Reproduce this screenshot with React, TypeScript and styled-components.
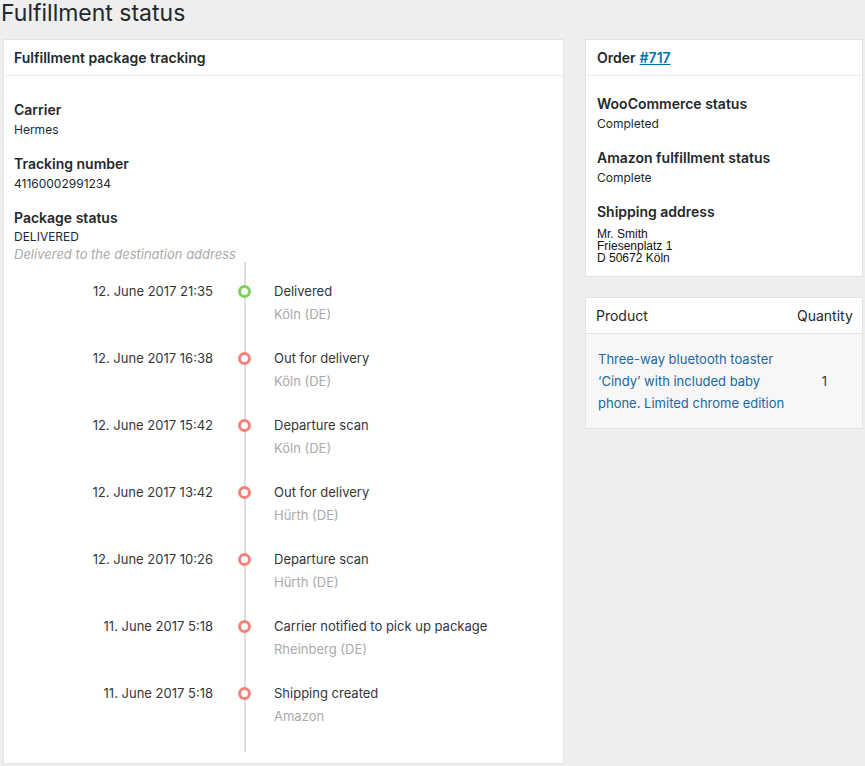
import styled, { createGlobalStyle } from "styled-components";

const GlobalStyle = createGlobalStyle`
  body {
    margin: 0;
    background: #eeeeee;
    font-family: Inter, "Noto Sans", sans-serif;
    color: #32373c;
  }
`;

const Page = styled.div`
  width: 865px;
`;

const Title = styled.h1`
  margin: 0;
  padding-left: 1px;
  font-size: 23px;
  font-weight: 400;
  line-height: 26px;
  color: #23282d;
  height: 39px;
`;

const Columns = styled.div`
  display: flex;
  align-items: flex-start;
  gap: 21px;
  padding-left: 3px;
`;

const Side = styled.div`
  display: flex;
  flex-direction: column;
  gap: 20px;
  width: 278px;
`;

const Panel = styled.section<{ $width?: number; $pad?: number }>`
  background: #fff;
  border: 1px solid #e3e3e3;
  box-sizing: border-box;
  width: ${({ $width }) => ($width ? `${$width}px` : "100%")};
  --pad: ${({ $pad }) => $pad ?? 10}px;
`;

const PanelHeader = styled.h2`
  margin: 0;
  height: 35px;
  display: flex;
  align-items: center;
  padding: 0 var(--pad);
  border-bottom: 1px solid #eeeeee;
  font-size: 14px;
  font-weight: 600;
  color: #23282d;

  a {
    color: #0073aa;
    margin-left: 4px;
  }
`;

const PanelBody = styled.div<{ $top: number; $bottom: number }>`
  padding: ${({ $top }) => $top}px var(--pad) ${({ $bottom }) => $bottom}px;
`;

const Field = styled.div`
  & + & {
    margin-top: 14px;
  }
`;

const Label = styled.h4`
  margin: 0;
  font-size: 14px;
  font-weight: 600;
  line-height: 20px;
  color: #23282d;
`;

const Value = styled.div<{ $lh?: number }>`
  font-size: 12px;
  line-height: ${({ $lh }) => $lh ?? 20}px;
  color: #23282d;
`;

const Note = styled.div`
  font-size: 13px;
  font-style: italic;
  line-height: 16px;
  color: #aaaaaa;
`;

const Address = styled.address`
  margin-top: 6px;
  font-style: normal;
  font-family: "Liberation Sans", Arial, sans-serif;
  font-size: 12px;
  line-height: 12px;
  color: #111;
`;

const Timeline = styled.div`
  position: relative;
  padding: 19px 0 24px;
`;

const Rail = styled.div`
  position: absolute;
  top: 0;
  bottom: 0;
  left: 230px;
  width: 2px;
  background: #dddddd;
`;

const Event = styled.div`
  position: relative;
  display: flex;
  align-items: flex-start;
  height: 67px;

  &:last-child {
    height: 45px;
  }
`;

const When = styled.div`
  width: 199px;
  text-align: right;
  font-size: 13px;
  line-height: 20px;
  color: #32373c;
`;

const Marker = styled.div`
  width: 63px;
  height: 20px;
  margin-right: -2px;
  display: flex;
  align-items: center;
  justify-content: center;
`;

const Dot = styled.span<{ $done?: boolean }>`
  width: 13px;
  height: 13px;
  box-sizing: border-box;
  border-radius: 50%;
  background: #fff;
  border: 3px solid ${({ $done }) => ($done ? "#7ed05b" : "#f5817b")};
`;

const What = styled.div`
  font-size: 13px;
  line-height: 20px;
  color: #32373c;
`;

const Where = styled.div`
  margin-top: 3px;
  font-size: 13px;
  line-height: 20px;
  color: #aaaaaa;
`;

const Table = styled.div`
  background: #fff;
  border: 1px solid #e3e3e3;
`;

const TableRow = styled.div<{ $head?: boolean }>`
  display: grid;
  grid-template-columns: 1fr 55px;
  align-items: center;
  background: ${({ $head }) => ($head ? "#fff" : "#f7f7f7")};
  border-bottom: ${({ $head }) => ($head ? "1px solid #e1e1e1" : "none")};
  min-height: ${({ $head }) => ($head ? 35 : 0)}px;
  padding: ${({ $head }) => ($head ? "0 10px" : "14px 10px 14px 12px")};
`;

const HeadCell = styled.div<{ $right?: boolean }>`
  font-size: 14px;
  color: #23282d;
  text-align: ${({ $right }) => ($right ? "right" : "left")};
`;

const ProductName = styled.a`
  width: 190px;
  font-size: 13px;
  line-height: 22px;
  color: #21679e;
  text-decoration: none;
`;

const Qty = styled.div`
  font-size: 13px;
  text-align: center;
  color: #32373c;
`;

const events = [
  { when: "12. June 2017 21:35", what: "Delivered", where: "Köln (DE)", done: true },
  { when: "12. June 2017 16:38", what: "Out for delivery", where: "Köln (DE)" },
  { when: "12. June 2017 15:42", what: "Departure scan", where: "Köln (DE)" },
  { when: "12. June 2017 13:42", what: "Out for delivery", where: "Hürth (DE)" },
  { when: "12. June 2017 10:26", what: "Departure scan", where: "Hürth (DE)" },
  { when: "11. June 2017 5:18", what: "Carrier notified to pick up package", where: "Rheinberg (DE)" },
  { when: "11. June 2017 5:18", what: "Shipping created", where: "Amazon" },
];

export default function App() {
  return (
    <Page>
      <GlobalStyle />
      <Title>Fulfillment status</Title>
      <Columns>
        <Panel $width={561}>
          <PanelHeader>Fulfillment package tracking</PanelHeader>
          <PanelBody $top={24} $bottom={11}>
            <Field>
              <Label>Carrier</Label>
              <Value>Hermes</Value>
            </Field>
            <Field>
              <Label>Tracking number</Label>
              <Value>41160002991234</Value>
            </Field>
            <Field>
              <Label>Package status</Label>
              <Value $lh={18}>DELIVERED</Value>
              <Note>Delivered to the destination address</Note>
            </Field>
            <Timeline>
              <Rail />
              {events.map((e, i) => (
                <Event key={i}>
                  <When>{e.when}</When>
                  <Marker>
                    <Dot $done={e.done} />
                  </Marker>
                  <div>
                    <What>{e.what}</What>
                    <Where>{e.where}</Where>
                  </div>
                </Event>
              ))}
            </Timeline>
          </PanelBody>
        </Panel>

        <Side>
          <Panel $pad={11}>
            <PanelHeader>
              Order <a href="#">#717</a>
            </PanelHeader>
            <PanelBody $top={18} $bottom={12}>
              <Field>
                <Label>WooCommerce status</Label>
                <Value>Completed</Value>
              </Field>
              <Field>
                <Label>Amazon fulfillment status</Label>
                <Value>Complete</Value>
              </Field>
              <Field>
                <Label>Shipping address</Label>
                <Address>
                  Mr. Smith
                  <br />
                  Friesenplatz 1
                  <br />
                  D 50672 Köln
                </Address>
              </Field>
            </PanelBody>
          </Panel>

          <Table>
            <TableRow $head>
              <HeadCell>Product</HeadCell>
              <HeadCell $right>Quantity</HeadCell>
            </TableRow>
            <TableRow>
              <ProductName href="#">
                Three-way bluetooth toaster ‘Cindy’ with included baby phone. Limited chrome edition
              </ProductName>
              <Qty>1</Qty>
            </TableRow>
          </Table>
        </Side>
      </Columns>
    </Page>
  );
}
